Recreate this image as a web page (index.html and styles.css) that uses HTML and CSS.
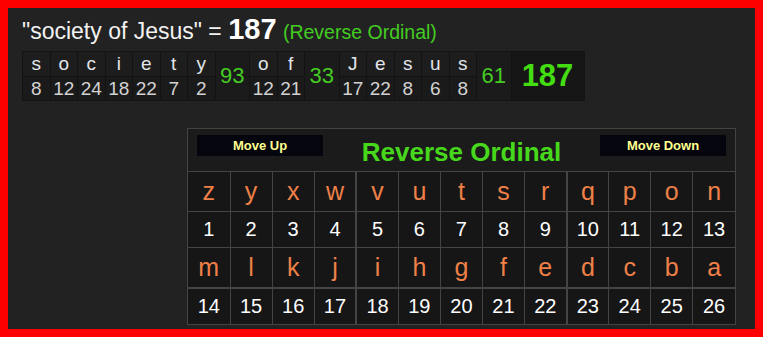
FILE: index.html
```html
<!DOCTYPE html>
<html>
<head>
<meta charset="utf-8">
<link rel="stylesheet" href="styles.css">
</head>
<body>
<div class="page">
  <h1 class="title">"society of Jesus" = <span class="title-num">187</span> <span class="title-cipher">(Reverse Ordinal)</span></h1>
  <table class="breakdown">
    <tr class="letters">
      <td>s</td><td>o</td><td>c</td><td>i</td><td>e</td><td>t</td><td>y</td>
      <td class="sum" rowspan="2">93</td>
      <td>o</td><td>f</td>
      <td class="sum" rowspan="2">33</td>
      <td>J</td><td>e</td><td>s</td><td>u</td><td>s</td>
      <td class="sum" rowspan="2">61</td>
      <td class="total" rowspan="2">187</td>
    </tr>
    <tr class="values">
      <td>8</td><td>12</td><td>24</td><td>18</td><td>22</td><td>7</td><td>2</td>
      <td>12</td><td>21</td>
      <td>17</td><td>22</td><td>8</td><td>6</td><td>8</td>
    </tr>
  </table>
  <div class="cipher">
    <div class="cipher-head">
      <button class="move-btn">Move Up</button>
      <div class="cipher-name">Reverse Ordinal</div>
      <button class="move-btn">Move Down</button>
    </div>
    <table class="chart">
      <tr class="chart-letters">
        <td>z</td><td>y</td><td>x</td><td>w</td><td class="gl">v</td><td>u</td><td>t</td><td>s</td><td>r</td><td class="gl">q</td><td>p</td><td>o</td><td>n</td>
      </tr>
      <tr class="chart-values">
        <td>1</td><td>2</td><td>3</td><td>4</td><td class="gl">5</td><td>6</td><td>7</td><td>8</td><td>9</td><td class="gl">10</td><td>11</td><td>12</td><td>13</td>
      </tr>
      <tr class="chart-letters">
        <td>m</td><td>l</td><td>k</td><td>j</td><td class="gl">i</td><td>h</td><td>g</td><td>f</td><td>e</td><td class="gl">d</td><td>c</td><td>b</td><td>a</td>
      </tr>
      <tr class="chart-values gt">
        <td>14</td><td>15</td><td>16</td><td>17</td><td class="gl">18</td><td>19</td><td>20</td><td>21</td><td>22</td><td class="gl">23</td><td>24</td><td>25</td><td>26</td>
      </tr>
    </table>
  </div>
</div>
</body>
</html>
```

FILE: styles.css
```css
html, body {
  margin: 0;
  padding: 0;
}
body {
  border: 8px solid #ff0000;
  background: #222222;
  height: 321px;
  overflow: hidden;
  font-family: "Liberation Sans", Arial, sans-serif;
  color: #ffffff;
}
.page {
  display: flex;
  flex-direction: column;
  padding: 6px 19px 0 14px;
}
.title {
  margin: 0;
  font-size: 23px;
  font-weight: normal;
  line-height: 30px;
  color: #f2f2f2;
  white-space: nowrap;
}
.title-num {
  font-size: 29px;
  font-weight: bold;
  color: #ffffff;
}
.title-cipher {
  font-size: 19.5px;
  color: #44cc22;
}
.breakdown {
  margin-top: 4px;
  border-collapse: separate;
  border-spacing: 1px;
  background: #131313;
  table-layout: fixed;
  align-self: flex-start;
}
.breakdown td {
  padding: 0;
  text-align: center;
  width: 26.5px;
  font-size: 19px;
}
.breakdown .letters td {
  height: 24px;
  background: #1d1d1d;
  color: #e2e6ea;
}
.breakdown .values td {
  height: 23px;
  background: #1a1a1a;
  color: #d2d2d2;
}
.breakdown td.sum {
  width: 33.5px;
  background: #1b1b1b;
  color: #44cc22;
  font-size: 22px;
}
.breakdown td.total {
  width: 72px;
  background: #161616;
  color: #44dd11;
  font-size: 31px;
  font-weight: bold;
}
.cipher {
  align-self: flex-end;
  margin-top: 27px;
  width: 547px;
  border: 1px solid #444444;
  background: #1b1b1b;
}
.cipher-head {
  height: 43px;
  border-bottom: 1px solid #444444;
  display: flex;
  justify-content: space-between;
  align-items: flex-start;
  padding: 6px 9px 0 9px;
  box-sizing: border-box;
}
.move-btn {
  width: 126px;
  height: 21px;
  border: none;
  background: #05050d;
  color: #ffff90;
  font-family: "Liberation Sans", Arial, sans-serif;
  font-size: 13px;
  font-weight: bold;
  padding: 0;
}
.cipher-name {
  color: #47d81c;
  font-size: 26px;
  font-weight: bold;
  line-height: 30px;
  margin-top: 2px;
}
.chart {
  width: 100%;
  border-collapse: collapse;
  border-style: hidden;
  table-layout: fixed;
  background: #161616;
}
.chart td {
  border: 1px solid #444444;
  padding: 0;
  text-align: center;
}
.chart td.gl {
  border-left: 2px solid #444444;
}
.chart tr.gt td {
  border-top: 2px solid #444444;
}
.chart-letters td {
  height: 39px;
  color: #ee8048;
  font-size: 25px;
}
.chart-values td {
  height: 35px;
  color: #ffffff;
  font-size: 20px;
}
```
